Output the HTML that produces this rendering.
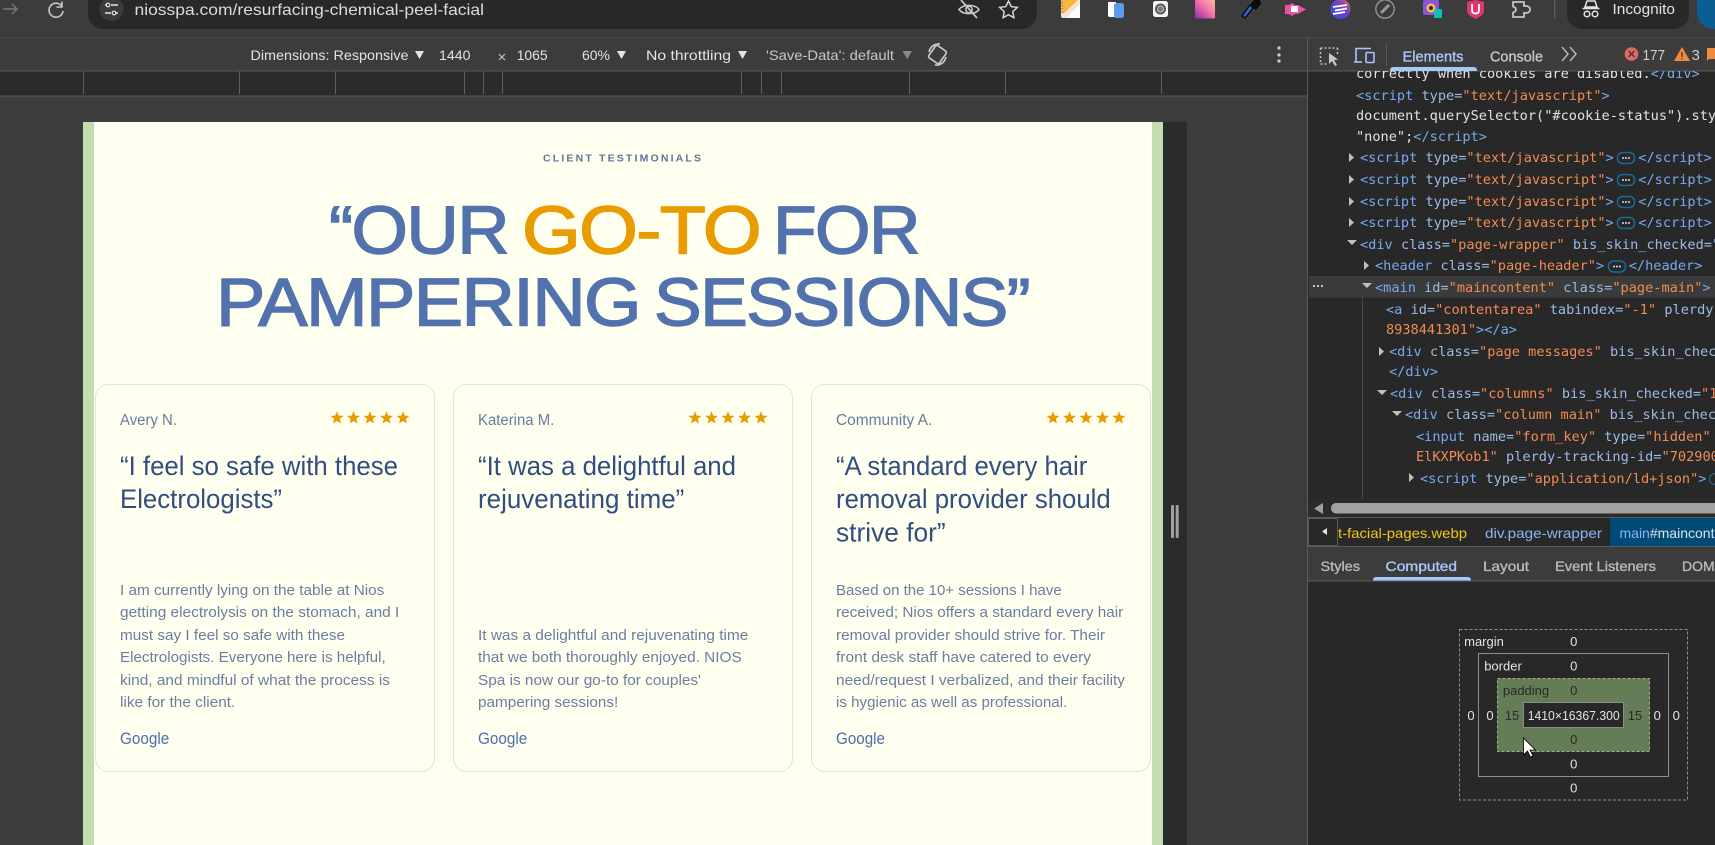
<!DOCTYPE html>
<html lang="en"><head><meta charset="utf-8"><title>Client testimonials</title>
<style>
html,body{margin:0;padding:0;background:#3c3c3c;width:1715px;height:845px;overflow:hidden}
svg{display:block;position:absolute;left:0;top:0}
text{white-space:pre}
.ui{font-family:"Liberation Sans",sans-serif;font-size:14px;fill:#e3e3e3}
.h{font-family:"Liberation Sans",sans-serif;font-size:68px;letter-spacing:-1.5px;fill:#5272ad;stroke:#5272ad;stroke-width:1.4}
.h.o{fill:#e99c00;stroke:#e99c00}
.n{font-family:"Liberation Sans",sans-serif;font-size:15.5px;fill:#6a7b9e}
.q{font-family:"Liberation Sans",sans-serif;font-size:27.2px;fill:#324d80}
.b{font-family:"Liberation Sans",sans-serif;font-size:15.2px;fill:#6d7d9f}
.g{font-family:"Liberation Sans",sans-serif;font-size:17px;fill:#4f6eae}
.m{font-family:"DejaVu Sans Mono","Liberation Mono",monospace;font-size:13.6px;fill:#e3e3e3}
.m .t{fill:#78a9f0}.m .a{fill:#9dbbe8}.m .v{fill:#f28b54}
.x{font-family:"Liberation Sans",sans-serif;font-size:13px;fill:#e3e3e3;text-anchor:middle}
.tab{font-family:"Liberation Sans",sans-serif;font-size:14px;fill:#b9b9b9;stroke:#b9b9b9;stroke-width:.35}
.tab.on{fill:#a8c7fa;stroke:#a8c7fa}
</style></head><body>
<svg width="1715" height="845" viewBox="0 0 1715 845" xmlns="http://www.w3.org/2000/svg">
<defs>
<polygon id="s" points="0,-6.8 1.76,-2.43 6.47,-2.1 2.85,.93 4,5.5 0,3 -4,5.5 -2.85,.93 -6.47,-2.1 -1.76,-2.43" fill="#e99c00"/>
<g id="st"><use href="#s" x="0"/><use href="#s" x="16.5"/><use href="#s" x="33"/><use href="#s" x="49.5"/><use href="#s" x="66"/></g>
<g id="more"><rect x="-8.5" y="-5.5" width="17" height="11" rx="5" fill="none" stroke="#1a6a9a" stroke-width="1.5"/><circle cx="-3" r="1" fill="#cfe0ef"/><circle cx="0" r="1" fill="#cfe0ef"/><circle cx="3" r="1" fill="#cfe0ef"/></g>
<clipPath id="tree"><rect x="1308" y="71" width="407" height="427"/></clipPath>
</defs>
<rect width="1715" height="845" fill="#3c3c3c"/>

<!-- browser top -->
<path d="M88 0H1037V14a15 15 0 0 1-15 15H103a15 15 0 0 1-15-15Z" fill="#282828"/>
<path d="M3 9H17M12 4l5 5-5 5" fill="none" stroke="#777" stroke-width="1.5"/>
<path d="M62 6.5A7 7 0 1 0 63 11M62 1.5V7H56.5" fill="none" stroke="#c7c7c7" stroke-width="1.6"/>
<circle cx="111.5" cy="9" r="12" fill="#3c3c3c"/>
<path d="M105 5h2M111 5h7M105 13h6M116 13h2" stroke="#e3e3e3" stroke-width="1.4" fill="none"/>
<circle cx="108" cy="5" r="1.8" fill="none" stroke="#e3e3e3" stroke-width="1.2"/><circle cx="114" cy="13" r="1.8" fill="none" stroke="#e3e3e3" stroke-width="1.2"/>
<text class="ui" x="134.5" y="15" style="font-size:16px;fill:#dcdcdc" textLength="349.5" lengthAdjust="spacingAndGlyphs">niosspa.com/resurfacing-chemical-peel-facial</text>
<!-- eye off -->
<path d="M959 9.5C963 4 975 4 979 9.5C975 15 963 15 959 9.5Z" fill="none" stroke="#c7c7c7" stroke-width="1.6"/><circle cx="969" cy="9.5" r="3.2" fill="none" stroke="#c7c7c7" stroke-width="1.5"/><path d="M961 0L977 18" stroke="#c7c7c7" stroke-width="1.7"/>
<path d="M1008.5 1l2.7 5.6 6.1.8-4.5 4.2 1.1 6.1-5.4-3-5.4 3 1.1-6.1-4.5-4.2 6.1-.8Z" fill="none" stroke="#d5d5d5" stroke-width="1.5"/>
<!-- ext icons -->
<path d="M1061 0H1080V16a2 2 0 0 1-2 2H1063a2 2 0 0 1-2-2Z" fill="#f2e6d5"/><path d="M1061 0H1078L1063 14Z" fill="#f6b544"/><path d="M1080 4V18H1066Z" fill="#fff" opacity=".9"/><path d="M1062 2V14" stroke="#a9762c" stroke-width="1.5" stroke-dasharray="1.5 1.5"/>
<path d="M1108 2h8V17h-6a2 2 0 0 1-2-2Z" fill="#fff"/><rect x="1114" y="3" width="10" height="15" rx="2.5" fill="#5a9bee"/>
<rect x="1153" y="1" width="15" height="16" rx="2.5" fill="#f5f5f5"/><circle cx="1160.5" cy="9" r="5.5" fill="#555"/><circle cx="1160.5" cy="9" r="3.6" fill="#bbb"/><circle cx="1160.5" cy="9" r="2.4" fill="#777"/>
<defs><linearGradient id="gr" x1="1" y1="0" x2="0" y2="1"><stop offset="0" stop-color="#fdc0a0"/><stop offset=".5" stop-color="#f06aa8"/><stop offset="1" stop-color="#8a2db0"/></linearGradient>
<linearGradient id="gb" x1="0" y1="1" x2="1" y2="0"><stop offset="0" stop-color="#2d55e0"/><stop offset=".6" stop-color="#7040c8"/><stop offset="1" stop-color="#ef6d3c"/></linearGradient></defs>
<rect x="1195" y="0" width="20" height="18.5" rx="1" fill="url(#gr)"/>
<path d="M1242 16l3 2 8-10-3-3Z" fill="#3c65d0" stroke="#000" stroke-width="1.2"/><path d="M1250 5l4-5h6l1 4-5 6Z" fill="#0a0a0a"/>
<path d="M1285 5h4l3-2 3 2h3l8 4.500-8 4.500h-3l-3 2-3-2h-4Z" fill="#ef4fa5"/><rect x="1291" y="6" width="7" height="6" fill="#fff"/>
<circle cx="1340.500" cy="9" r="10" fill="url(#gb)"/><path d="M1333 7l14-2M1335 10.500l12-2M1333 14l12-2" stroke="#fff" stroke-width="1.800"/>
<circle cx="1385" cy="9" r="9.200" fill="none" stroke="#9a9a9a" stroke-width="1.300"/><path d="M1381 13l8-8" stroke="#9a9a9a" stroke-width="3"/>
<rect x="1423" y="0" width="16" height="15" rx="2" fill="#8a55d8"/><circle cx="1431" cy="8" r="4.500" fill="#ffc83c"/><circle cx="1431" cy="8" r="2.200" fill="#3a2a60"/><rect x="1434" y="9" width="8" height="9" rx="1.500" fill="#12bfb4"/>
<path d="M1467 2l8.500-2 8.500 2V11q0 4-8.500 8-8.500-4-8.500-8Z" fill="#e0356f"/><path d="M1472 4v6q0 3.500 3.500 3.500T1479 10V4" fill="none" stroke="#fff" stroke-width="1.800"/>
<path d="M1513 2h11v4q6-.5 6 3.500t-6 3.500v4h-11v-4.500q3-1 3-3t-3-3Z" fill="none" stroke="#c3c3c3" stroke-width="1.800"/>
<rect x="1554" y="0" width="1.300" height="18" fill="#5c5c5c"/>
<path d="M1567 0H1689V14a15 15 0 0 1-15 15H1582a15 15 0 0 1-15-15Z" fill="#282828"/>
<path d="M1587 1h8l2 6H1585ZM1582.500 8.500h17" stroke="#e3e3e3" stroke-width="1.500" fill="none"/><circle cx="1587" cy="14" r="2.800" fill="none" stroke="#e3e3e3" stroke-width="1.500"/><circle cx="1595" cy="14" r="2.800" fill="none" stroke="#e3e3e3" stroke-width="1.500"/>
<text class="ui" x="1612.500" y="14" textLength="62.500" lengthAdjust="spacingAndGlyphs" style="font-size:15px">Incognito</text>
<path d="M1697 0H1715V29H1714A17 17 0 0 1 1697 12Z" fill="#0c5e92"/>
<rect x="0" y="37" width="1715" height="1" fill="#4a4a4a"/>

<!-- device toolbar -->
<text class="ui" x="250.500" y="60" textLength="158" lengthAdjust="spacingAndGlyphs">Dimensions: Responsive</text>
<path d="M415 51h9l-4.500 8Z" fill="#e3e3e3"/>
<text class="ui" x="439" y="60" textLength="31.500" lengthAdjust="spacingAndGlyphs">1440</text>
<text class="ui" x="497.500" y="62" style="font-size:15px;fill:#c8c8c8">×</text>
<text class="ui" x="516.700" y="60" textLength="31" lengthAdjust="spacingAndGlyphs">1065</text>
<text class="ui" x="582" y="60" textLength="28" lengthAdjust="spacingAndGlyphs">60%</text>
<path d="M617 51h9l-4.500 8Z" fill="#e3e3e3"/>
<text class="ui" x="646" y="60" textLength="85" lengthAdjust="spacingAndGlyphs">No throttling</text>
<path d="M738 51h9l-4.500 8Z" fill="#e3e3e3"/>
<text class="ui" x="766" y="60" textLength="128" lengthAdjust="spacingAndGlyphs" style="fill:#c6c6c6">'Save-Data': default</text>
<path d="M902.500 51h9.500l-4.750 8Z" fill="#8a8a8a"/>
<g fill="none" stroke="#c7c7c7" stroke-width="1.700"><rect x="930" y="48" width="15" height="13" rx="2" transform="rotate(-55 937.500 54.500)"/><path d="M929 52A10 10 0 0 1 940 44M946 57A10 10 0 0 1 935 65"/></g>
<circle cx="1279" cy="48" r="1.600" fill="#d0d0d0"/><circle cx="1279" cy="55" r="1.600" fill="#d0d0d0"/><circle cx="1279" cy="61" r="1.600" fill="#d0d0d0"/>

<!-- ruler -->
<rect x="0" y="71" width="1308" height="25" fill="#2a2b2c"/>
<rect x="0" y="70.500" width="1308" height="1" fill="#5a5a5a"/><rect x="0" y="95.500" width="1308" height="1" fill="#5a5a5a"/>
<g fill="#5f5f5f"><rect x="83" y="71" width="1" height="23"/><rect x="239" y="71" width="1" height="23"/><rect x="335" y="71" width="1" height="23"/><rect x="464" y="71" width="1" height="23"/><rect x="483" y="71" width="1" height="23"/><rect x="502" y="71" width="1" height="23"/><rect x="741" y="71" width="1" height="23"/><rect x="761" y="71" width="1" height="23"/><rect x="781" y="71" width="1" height="23"/><rect x="909" y="71" width="1" height="23"/><rect x="1005" y="71" width="1" height="23"/><rect x="1161" y="71" width="1" height="23"/></g>

<!-- page -->
<rect x="83" y="122" width="1069" height="723" fill="#fffff0"/>
<rect x="83" y="122" width="11" height="723" fill="#c4ddaf"/>
<rect x="1152" y="122" width="11" height="723" fill="#c4ddaf"/>
<rect x="1163" y="122" width="24" height="723" fill="#2a2b2c"/>
<rect x="1171" y="505" width="3" height="33" rx="1" fill="#a0a0a0"/><rect x="1175.700" y="505" width="3" height="33" rx="1" fill="#a0a0a0"/>

<text x="543" y="161.500" textLength="158" style="font-family:'Liberation Sans',sans-serif;font-weight:bold;font-size:10.500px;fill:#5f7498">CLIENT TESTIMONIALS</text>
<text class="h" x="329" y="253.500" textLength="179" lengthAdjust="spacingAndGlyphs">“OUR</text>
<text class="h o" x="522" y="253.500" textLength="238" lengthAdjust="spacingAndGlyphs">GO-TO</text>
<text class="h" x="773" y="253.500" textLength="146" lengthAdjust="spacingAndGlyphs">FOR</text>
<text class="h" x="216" y="325.500" textLength="424" lengthAdjust="spacingAndGlyphs">PAMPERING</text>
<text class="h" x="654" y="325.500" textLength="375" lengthAdjust="spacingAndGlyphs">SESSIONS”</text>

<!-- cards -->
<g fill="none" stroke="#e0e4e6" stroke-width="1"><rect x="95.500" y="384.500" width="339" height="387" rx="13"/><rect x="453.500" y="384.500" width="339" height="387" rx="13"/><rect x="811.500" y="384.500" width="339" height="387" rx="13"/></g>

<text class="n" x="120" y="425" textLength="57" lengthAdjust="spacingAndGlyphs">Avery N.</text>
<use href="#st" x="337" y="418"/>
<text class="q" x="120" y="475" textLength="278" lengthAdjust="spacingAndGlyphs">“I feel so safe with these</text>
<text class="q" x="120" y="508" textLength="162" lengthAdjust="spacingAndGlyphs">Electrologists”</text>
<text class="b" x="120" y="595" textLength="264.300" lengthAdjust="spacingAndGlyphs">I am currently lying on the table at Nios</text>
<text class="b" x="120" y="617" textLength="279.300" lengthAdjust="spacingAndGlyphs">getting electrolysis on the stomach, and I</text>
<text class="b" x="120" y="640" textLength="225" lengthAdjust="spacingAndGlyphs">must say I feel so safe with these</text>
<text class="b" x="120" y="662" textLength="265.700" lengthAdjust="spacingAndGlyphs">Electrologists. Everyone here is helpful,</text>
<text class="b" x="120" y="685" textLength="270" lengthAdjust="spacingAndGlyphs">kind, and mindful of what the process is</text>
<text class="b" x="120" y="707" textLength="115.300" lengthAdjust="spacingAndGlyphs">like for the client.</text>
<text class="g" x="120" y="744" textLength="49.300" lengthAdjust="spacingAndGlyphs">Google</text>

<text class="n" x="478" y="425" textLength="76.300" lengthAdjust="spacingAndGlyphs">Katerina M.</text>
<use href="#st" x="695" y="418"/>
<text class="q" x="478" y="475" textLength="258" lengthAdjust="spacingAndGlyphs">“It was a delightful and</text>
<text class="q" x="478" y="508" textLength="206.300" lengthAdjust="spacingAndGlyphs">rejuvenating time”</text>
<text class="b" x="478" y="640" textLength="270.300" lengthAdjust="spacingAndGlyphs">It was a delightful and rejuvenating time</text>
<text class="b" x="478" y="662" textLength="263.700" lengthAdjust="spacingAndGlyphs">that we both thoroughly enjoyed. NIOS</text>
<text class="b" x="478" y="685" textLength="223" lengthAdjust="spacingAndGlyphs">Spa is now our go-to for couples'</text>
<text class="b" x="478" y="707" textLength="140.300" lengthAdjust="spacingAndGlyphs">pampering sessions!</text>
<text class="g" x="478" y="744" textLength="49.300" lengthAdjust="spacingAndGlyphs">Google</text>

<text class="n" x="836" y="425" textLength="96.300" lengthAdjust="spacingAndGlyphs">Community A.</text>
<use href="#st" x="1053" y="418"/>
<text class="q" x="836" y="475" textLength="251.300" lengthAdjust="spacingAndGlyphs">“A standard every hair</text>
<text class="q" x="836" y="508" textLength="274.700" lengthAdjust="spacingAndGlyphs">removal provider should</text>
<text class="q" x="836" y="541.500" textLength="109.700" lengthAdjust="spacingAndGlyphs">strive for”</text>
<text class="b" x="836" y="595" textLength="225.700" lengthAdjust="spacingAndGlyphs">Based on the 10+ sessions I have</text>
<text class="b" x="836" y="617" textLength="287.300" lengthAdjust="spacingAndGlyphs">received; Nios offers a standard every hair</text>
<text class="b" x="836" y="640" textLength="269" lengthAdjust="spacingAndGlyphs">removal provider should strive for. Their</text>
<text class="b" x="836" y="662" textLength="255" lengthAdjust="spacingAndGlyphs">front desk staff have catered to every</text>
<text class="b" x="836" y="685" textLength="289" lengthAdjust="spacingAndGlyphs">need/request I verbalized, and their facility</text>
<text class="b" x="836" y="707" textLength="231.300" lengthAdjust="spacingAndGlyphs">is hygienic as well as professional.</text>
<text class="g" x="836" y="744" textLength="49" lengthAdjust="spacingAndGlyphs">Google</text>

<!-- devtools -->
<rect x="1307" y="37" width="1" height="808" fill="#5a5a5a"/>
<rect x="1308" y="71" width="407" height="427" fill="#282828"/>
<rect x="1308" y="70.500" width="407" height="1" fill="#5a5a5a"/>
<path d="M1320.500 48h17M1320.500 48v16M1337.500 48v7M1320.500 64h7" fill="none" stroke="#bdbdbd" stroke-width="1.500" stroke-dasharray="2 2"/>
<path d="M1329 53l0 11 3-3 3 5 2-1-3-5 4-.500Z" fill="#c7c7c7"/>
<path d="M1354 62h8M1356 62V48.500h15" fill="none" stroke="#a8c7fa" stroke-width="1.600"/><rect x="1366" y="52.500" width="8" height="10" rx="1" fill="none" stroke="#a8c7fa" stroke-width="1.600"/>
<rect x="1386" y="44" width="1" height="22" fill="#5a5a5a"/>
<text class="tab on" x="1402.500" y="61.500" textLength="61" lengthAdjust="spacingAndGlyphs" style="font-size:15px">Elements</text>
<text class="tab" x="1490" y="61.500" textLength="53" lengthAdjust="spacingAndGlyphs" style="fill:#c6c6c6;stroke:#c6c6c6;font-size:15px">Console</text>
<path d="M1562 47l6 7-6 7M1570 47l6 7-6 7" fill="none" stroke="#b8b8b8" stroke-width="1.500"/>
<circle cx="1631.500" cy="54" r="6.800" fill="#e46962"/><path d="M1628.500 51l6 6M1634.500 51l-6 6" stroke="#3c3c3c" stroke-width="1.500"/>
<text class="ui" x="1642.500" y="60" textLength="22.500" lengthAdjust="spacingAndGlyphs" style="font-size:15px;fill:#d0d0d0">177</text>
<path d="M1682 47l8 14h-16Z" fill="#f08a3c"/><rect x="1681.300" y="52" width="1.400" height="5" fill="#3c3c3c"/><rect x="1681.300" y="58" width="1.400" height="1.400" fill="#3c3c3c"/>
<text class="ui" x="1691.500" y="60" style="font-size:15px;fill:#d0d0d0">3</text>
<path d="M1707 48h8V59h-6l-2 2Z" fill="#f08a3c"/>

<!-- DOM tree -->
<g clip-path="url(#tree)">
<text class="m" x="1356" y="78">correctly when cookies are disabled.<tspan class="t">&lt;/div&gt;</tspan></text>
<text class="m" x="1356" y="100"><tspan class="t">&lt;script</tspan> <tspan class="a">type=</tspan><tspan class="v">"text/javascript"</tspan><tspan class="t">&gt;</tspan></text>
<text class="m" x="1356" y="120">document.querySelector("#cookie-status").style.display =</text>
<text class="m" x="1356" y="141">"none";<tspan class="t">&lt;/script&gt;</tspan></text>
<text class="m" x="1360" y="162"><tspan class="t">&lt;script</tspan> <tspan class="a">type=</tspan><tspan class="v">"text/javascript"</tspan><tspan class="t">&gt;</tspan>   <tspan class="t">&lt;/script&gt;</tspan></text>
<text class="m" x="1360" y="184"><tspan class="t">&lt;script</tspan> <tspan class="a">type=</tspan><tspan class="v">"text/javascript"</tspan><tspan class="t">&gt;</tspan>   <tspan class="t">&lt;/script&gt;</tspan></text>
<text class="m" x="1360" y="206"><tspan class="t">&lt;script</tspan> <tspan class="a">type=</tspan><tspan class="v">"text/javascript"</tspan><tspan class="t">&gt;</tspan>   <tspan class="t">&lt;/script&gt;</tspan></text>
<text class="m" x="1360" y="227"><tspan class="t">&lt;script</tspan> <tspan class="a">type=</tspan><tspan class="v">"text/javascript"</tspan><tspan class="t">&gt;</tspan>   <tspan class="t">&lt;/script&gt;</tspan></text>
<text class="m" x="1360" y="249"><tspan class="t">&lt;div</tspan> <tspan class="a">class=</tspan><tspan class="v">"page-wrapper"</tspan> <tspan class="a">bis_skin_checked="1"</tspan></text>
<text class="m" x="1375" y="270"><tspan class="t">&lt;header</tspan> <tspan class="a">class=</tspan><tspan class="v">"page-header"</tspan><tspan class="t">&gt;</tspan>   <tspan class="t">&lt;/header&gt;</tspan></text>
</g>
<path d="M1390 71v-1a3 3 0 0 1 3-3h81a3 3 0 0 1 3 3v1Z" fill="#a8c7fa"/>
<use href="#more" x="1626" y="158"/><use href="#more" x="1626" y="180"/><use href="#more" x="1626" y="202"/><use href="#more" x="1626" y="223"/><use href="#more" x="1617" y="266.500"/>
<rect x="1309" y="276" width="406" height="21.500" fill="#3b3b3b"/>
<circle cx="1314" cy="286" r="1.100" fill="#d0d0d0"/><circle cx="1318" cy="286" r="1.100" fill="#d0d0d0"/><circle cx="1322" cy="286" r="1.100" fill="#d0d0d0"/>
<g>
<text class="m" x="1375" y="292"><tspan class="t">&lt;main</tspan> <tspan class="a">id=</tspan><tspan class="v">"maincontent"</tspan> <tspan class="a">class=</tspan><tspan class="v">"page-main"</tspan><tspan class="t">&gt;</tspan></text>
<text class="m" x="1386" y="314"><tspan class="t">&lt;a</tspan> <tspan class="a">id=</tspan><tspan class="v">"contentarea"</tspan> <tspan class="a">tabindex=</tspan><tspan class="v">"-1"</tspan> <tspan class="a">plerdy-tracking-id=</tspan></text>
<text class="m" x="1386" y="334"><tspan class="v">8938441301"</tspan><tspan class="t">&gt;&lt;/a&gt;</tspan></text>
<text class="m" x="1389" y="356"><tspan class="t">&lt;div</tspan> <tspan class="a">class=</tspan><tspan class="v">"page messages"</tspan> <tspan class="a">bis_skin_checked=</tspan></text>
<text class="m" x="1389" y="376"><tspan class="t">&lt;/div&gt;</tspan></text>
<text class="m" x="1390" y="398"><tspan class="t">&lt;div</tspan> <tspan class="a">class=</tspan><tspan class="v">"columns"</tspan> <tspan class="a">bis_skin_checked=</tspan><tspan class="v">"1"</tspan></text>
<text class="m" x="1405" y="419"><tspan class="t">&lt;div</tspan> <tspan class="a">class=</tspan><tspan class="v">"column main"</tspan> <tspan class="a">bis_skin_checked=</tspan></text>
<text class="m" x="1416" y="441"><tspan class="t">&lt;input</tspan> <tspan class="a">name=</tspan><tspan class="v">"form_key"</tspan> <tspan class="a">type=</tspan><tspan class="v">"hidden"</tspan> <tspan class="a">value=</tspan></text>
<text class="m" x="1416" y="461"><tspan class="v">ElKXPKob1"</tspan> <tspan class="a">plerdy-tracking-id=</tspan><tspan class="v">"70290000"</tspan></text>
<text class="m" x="1420" y="483"><tspan class="t">&lt;script</tspan> <tspan class="a">type=</tspan><tspan class="v">"application/ld+json"</tspan><tspan class="t">&gt;</tspan></text>
</g>
<circle cx="1715" cy="479" r="5.500" fill="none" stroke="#1a6a9a" stroke-width="1.200"/>
<!-- triangles -->
<g fill="#c0c0c0">
<path d="M1349 153v9l5-4.500ZM1349 175v9l5-4.500ZM1349 197v9l5-4.500ZM1349 218v9l5-4.500ZM1364 261v9l5-4.500ZM1379 347v9l5-4.500ZM1409 473v9l5-4.500Z"/>
<path d="M1347 240h10l-5 5ZM1362 283h10l-5 5ZM1377 390h10l-5 5ZM1392 411h10l-5 5Z"/>
</g>
<rect x="1362" y="297" width="1" height="201" fill="#4a4a4a"/>
<!-- scrollbar -->
<rect x="1308" y="498" width="407" height="19" fill="#2b2b2b"/>
<path d="M1323 503v11l-9-5.500Z" fill="#9e9e9e"/>
<rect x="1331" y="503" width="390" height="10.500" rx="5" fill="#a2a2a2"/>
<rect x="1308" y="517" width="407" height="1" fill="#5a5a5a"/>
<!-- breadcrumbs -->
<rect x="1308" y="518" width="407" height="28" fill="#282828"/>
<rect x="1308.500" y="518.500" width="29" height="27" fill="none" stroke="#5a5a5a"/>
<path d="M1327 528v7l-5-3.500Z" fill="#e3e3e3"/>
<text class="ui" x="1338" y="538" textLength="129" lengthAdjust="spacingAndGlyphs" style="fill:#f5c518">t-facial-pages.webp</text>
<text class="ui" x="1485" y="538" textLength="117" lengthAdjust="spacingAndGlyphs" style="fill:#8ab4f8">div.page-wrapper</text>
<rect x="1610" y="518" width="105" height="28" fill="#004a77"/>
<text class="ui" x="1619.500" y="538" style="fill:#8ab4f8">main<tspan fill="#e3e3e3">#maincontent</tspan></text>
<rect x="1308" y="546" width="407" height="1" fill="#5a5a5a"/>
<!-- sub tabs -->
<text class="tab" x="1320.500" y="571" textLength="39.500" lengthAdjust="spacingAndGlyphs">Styles</text>
<text class="tab on" x="1385.500" y="571" textLength="71.500" lengthAdjust="spacingAndGlyphs">Computed</text>
<text class="tab" x="1483" y="571" textLength="46" lengthAdjust="spacingAndGlyphs">Layout</text>
<text class="tab" x="1555" y="571" textLength="101" lengthAdjust="spacingAndGlyphs">Event Listeners</text>
<text class="tab" x="1682" y="571">DOM Breakpoints</text>
<path d="M1373 581v-1a3 3 0 0 1 3-3h92a3 3 0 0 1 3 3v1Z" fill="#a8c7fa"/>
<rect x="1308" y="580.500" width="407" height="1" fill="#5a5a5a"/>
<rect x="1308" y="581.500" width="407" height="264" fill="#282828"/>
<!-- box model -->
<rect x="1459.500" y="629.500" width="228" height="170.500" fill="none" stroke="#8f8f8f" stroke-dasharray="3 2"/>
<rect x="1478.500" y="653.500" width="190" height="123" fill="none" stroke="#8f8f8f"/>
<rect x="1497.500" y="678.500" width="152" height="73" fill="#647d57" stroke="#9fb096" stroke-dasharray="3 2"/>
<rect x="1523.500" y="702.500" width="100" height="25" fill="#282828" stroke="#8d8d8d"/>
<text class="x" x="1484" y="646">margin</text>
<text class="x" x="1573.700" y="646">0</text>
<text class="x" x="1503" y="670.500">border</text>
<text class="x" x="1573.700" y="670.500">0</text>
<text class="x" x="1526" y="695" style="fill:#2a2a2a">padding</text>
<text class="x" x="1573.700" y="695" style="fill:#2a2a2a">0</text>
<text class="x" x="1471" y="720">0</text><text class="x" x="1490" y="720">0</text>
<text class="x" x="1512" y="720" style="fill:#2a2a2a">15</text>
<text class="x" x="1573.700" y="720" textLength="92" lengthAdjust="spacingAndGlyphs">1410×16367.300</text>
<text class="x" x="1635" y="720" style="fill:#2a2a2a">15</text>
<text class="x" x="1657.300" y="720">0</text><text class="x" x="1676.300" y="720">0</text>
<text class="x" x="1573.700" y="744" style="fill:#2a2a2a">0</text>
<text class="x" x="1573.700" y="768.500">0</text>
<text class="x" x="1573.700" y="792.500">0</text>
<path d="M1523.500 738v17l4-4 3 6 2.500-1-3-6 5.500 0Z" fill="#fff" stroke="#000" stroke-width=".8"/>
</svg>
</body></html>
